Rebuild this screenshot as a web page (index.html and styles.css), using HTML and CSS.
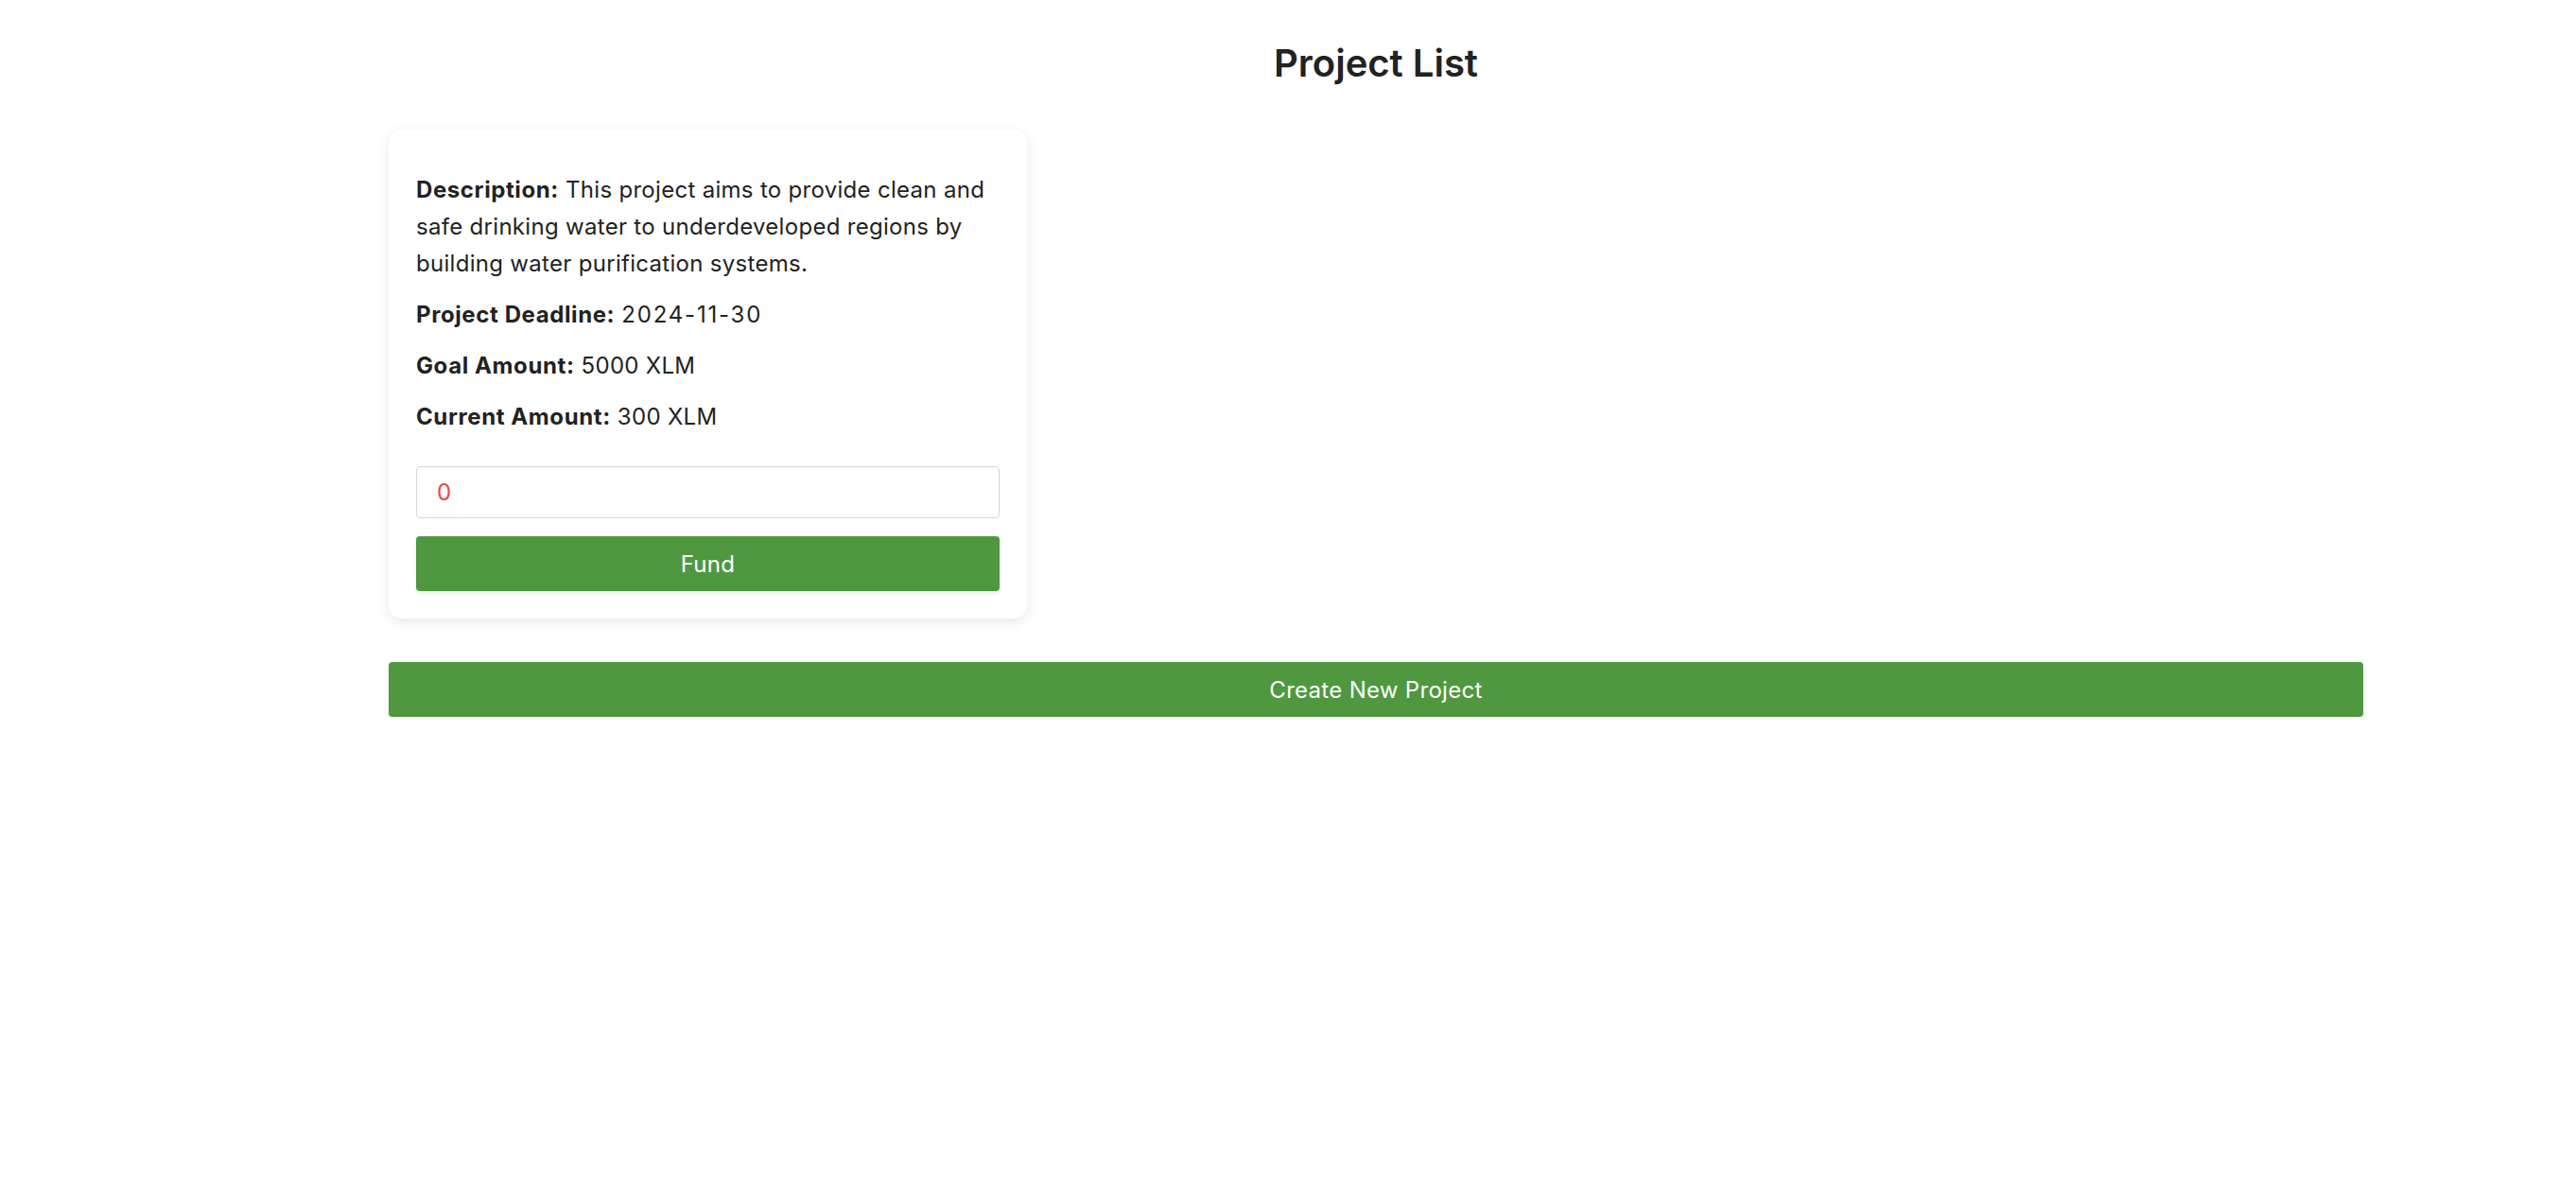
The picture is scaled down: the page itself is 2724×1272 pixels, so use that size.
FILE: index.html
```html
<!DOCTYPE html>
<html lang="en">
<head>
<meta charset="utf-8">
<title>Project List</title>
<link rel="stylesheet" href="styles.css">
</head>
<body>
<main class="page">
  <h1 class="title">Project List</h1>
  <section class="project-grid">
    <article class="card">
      <p><strong>Description:</strong> This project aims to provide clean and safe drinking water to underdeveloped regions by building water purification systems.</p>
      <p><strong>Project Deadline:</strong> <span class="date">2024-11-30</span></p>
      <p><strong>Goal Amount:</strong> 5000 XLM</p>
      <p><strong>Current Amount:</strong> 300 XLM</p>
      <input class="fund-input" type="number" value="0">
      <button class="btn fund-btn" type="button">Fund</button>
    </article>
  </section>
  <button class="btn create-btn" type="button">Create New Project</button>
</main>
</body>
</html>
```
FILE: styles.css
```css
* { box-sizing: border-box; }
html, body { margin: 0; padding: 0; background: #fff; }
body {
  font-family: Inter, "Noto Sans", "Liberation Sans", sans-serif;
  color: #222;
}
.page {
  margin: 0 225px 0 411px;
  padding-top: 41px;
}
.title {
  margin: 0 0 45px;
  font-size: 40px;
  line-height: 51px;
  font-weight: 600;
  text-align: center;
  color: #222;
}
.project-grid {
  display: grid;
  grid-template-columns: repeat(auto-fill, 675px);
  gap: 30px;
}
.card {
  background: #fff;
  border-radius: 14px;
  padding: 29px;
  box-shadow: 0 4px 14px rgba(0, 0, 0, 0.09);
}
.card p {
  margin: 15px 0;
  font-size: 24px;
  line-height: 39px;
  letter-spacing: 0.3px;
}
.card p strong {
  font-weight: 700;
  letter-spacing: 0.6px;
}
.card p .date { letter-spacing: 1.8px; }
.fund-input {
  display: block;
  width: 100%;
  height: 55px;
  margin-top: 33px;
  padding: 0 21px;
  border: 1px solid #d6d6d6;
  border-radius: 4px;
  font-family: inherit;
  font-size: 24px;
  color: #e5484d;
  background: #fff;
  outline: none;
  -moz-appearance: textfield;
}
.fund-input::-webkit-outer-spin-button,
.fund-input::-webkit-inner-spin-button { -webkit-appearance: none; margin: 0; }
.btn {
  display: block;
  width: 100%;
  border: none;
  border-radius: 4px;
  background: #4f9840;
  color: #fff;
  font-family: inherit;
  font-size: 24px;
  font-weight: 400;
  letter-spacing: 0.3px;
  box-shadow: 0 3px 4px rgba(0, 0, 0, 0.07);
  cursor: pointer;
}
.fund-btn {
  height: 58px;
  margin-top: 19px;
}
.create-btn {
  height: 58px;
  margin-top: 46px;
}
```
